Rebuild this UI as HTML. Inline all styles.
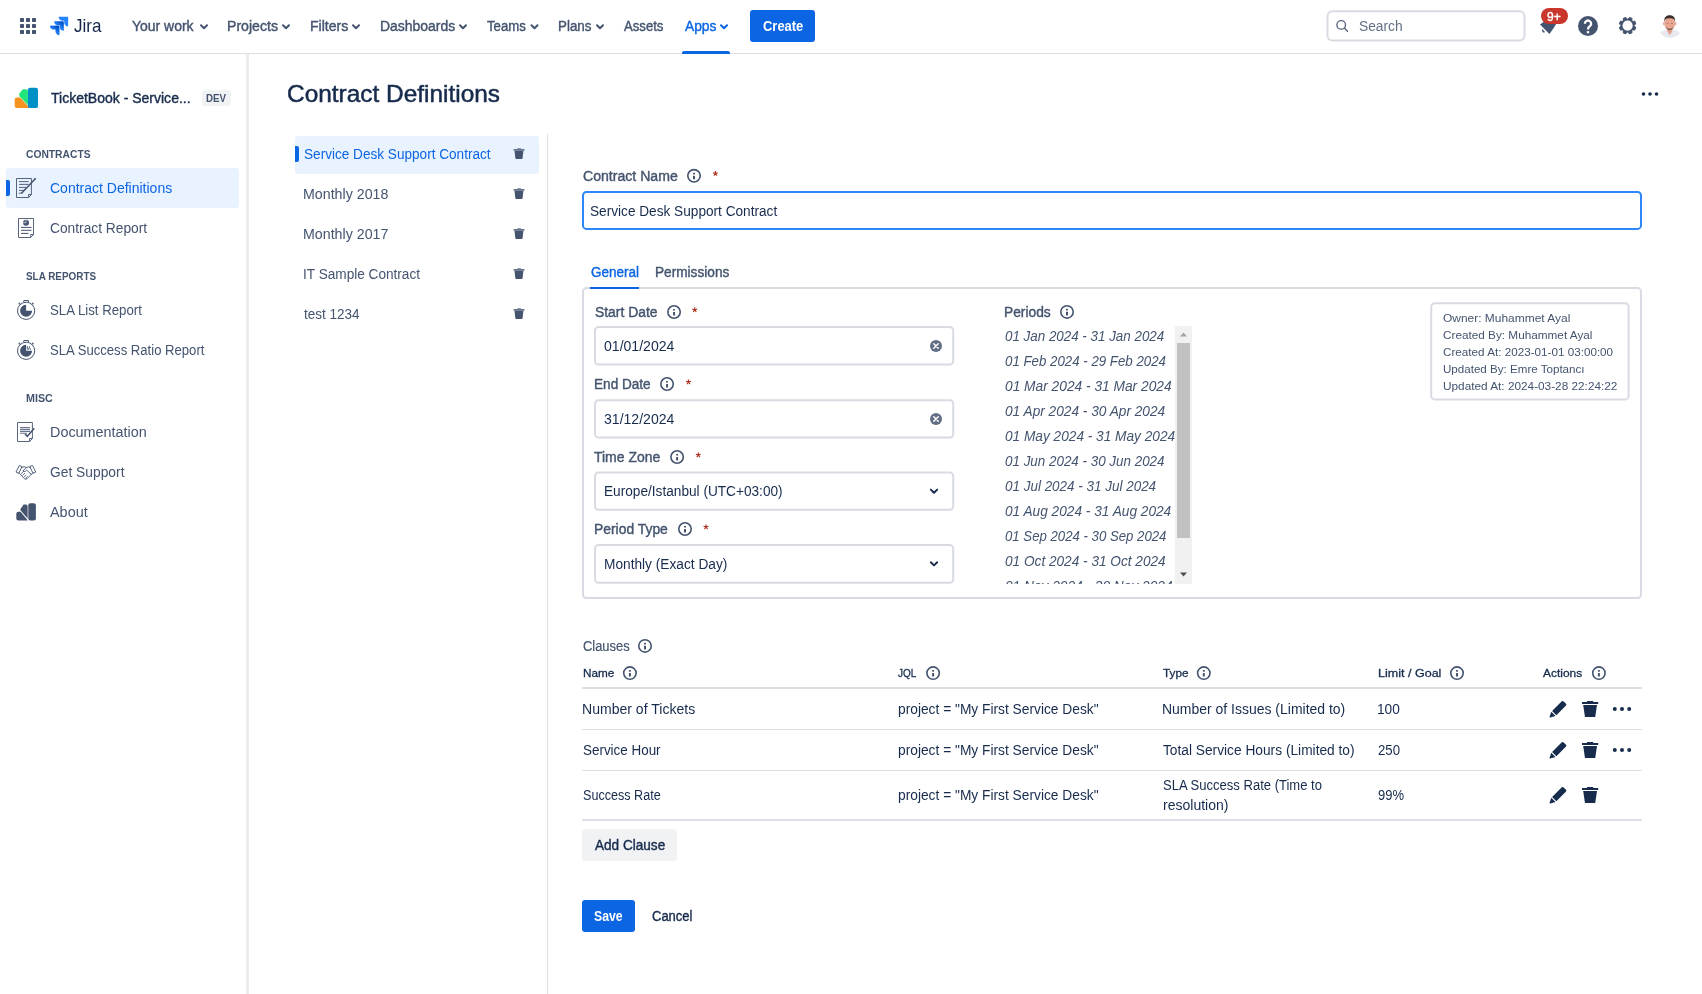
<!DOCTYPE html>
<html><head><meta charset="utf-8"><title>Contract Definitions - Jira</title>
<style>
*{box-sizing:border-box;margin:0;padding:0}
html,body{width:1702px;height:994px;overflow:hidden;background:#fff;font-family:"Liberation Sans",sans-serif}
.a{position:absolute}
.t{position:absolute;white-space:nowrap;line-height:20px;height:20px;transform-origin:0 50%}
.m{-webkit-text-stroke:0.4px currentColor}
.m2{-webkit-text-stroke:0.5px currentColor}
.m0{-webkit-text-stroke:0.2px currentColor}
.m1{-webkit-text-stroke:0.3px currentColor}
.b{font-weight:bold}
.i{font-style:italic}
svg{position:absolute;overflow:visible}
.inp{position:absolute;border:2px solid #DCDFE4;border-radius:4px;background:#fff}
.hl{position:absolute;background:#DCDFE4}
</style></head><body>
<!-- ===== TOP NAV ===== -->
<div class="a" style="left:0;top:53px;width:1702px;height:1px;background:#DCDFE4"></div>
<!-- app switcher -->
<svg style="left:20px;top:18px" width="16" height="16" viewBox="0 0 16 16" fill="#44546F">
<rect x="0" y="0" width="4" height="4" rx=".7"/><rect x="6" y="0" width="4" height="4" rx=".7"/><rect x="12" y="0" width="4" height="4" rx=".7"/>
<rect x="0" y="6" width="4" height="4" rx=".7"/><rect x="6" y="6" width="4" height="4" rx=".7"/><rect x="12" y="6" width="4" height="4" rx=".7"/>
<rect x="0" y="12" width="4" height="4" rx=".7"/><rect x="6" y="12" width="4" height="4" rx=".7"/><rect x="12" y="12" width="4" height="4" rx=".7"/>
</svg>
<!-- jira logo -->
<svg style="left:48px;top:15px" width="22" height="22" viewBox="0 0 24 24">
<defs><linearGradient id="jg1" x1="0.9" y1="0.1" x2="0.45" y2="0.6"><stop offset="0.15" stop-color="#0052CC"/><stop offset="1" stop-color="#2684FF"/></linearGradient></defs>
<path fill="#2684FF" d="M11.53 2c0 2.4 1.97 4.35 4.35 4.35h1.78v1.7c0 2.4 1.94 4.34 4.34 4.35V2.84a.84.84 0 0 0-.84-.84h-9.63z"/>
<path fill="url(#jg1)" d="M6.77 6.8a4.362 4.362 0 0 0 4.34 4.34h1.8v1.72a4.362 4.362 0 0 0 4.34 4.34V7.63a.841.841 0 0 0-.83-.83H6.77z"/>
<path fill="url(#jg1)" d="M2 11.6c0 2.4 1.95 4.34 4.35 4.34h1.78v1.72c.01 2.39 1.95 4.34 4.34 4.34v-9.57a.84.84 0 0 0-.84-.84L2 11.600z"/>
</svg>
<!-- nav chevrons -->
<svg style="left:0;top:0" width="760" height="54" viewBox="0 0 760 54" fill="none" stroke="#44546F" stroke-width="2" stroke-linecap="round" stroke-linejoin="round">
<path d="M201 25.2l3 3 3-3"/><path d="M283 25.200l3 3 3-3"/><path d="M353 25.200l3 3 3-3"/><path d="M460 25.200l3 3 3-3"/><path d="M531.500 25.200l3 3 3-3"/><path d="M597 25.200l3 3 3-3"/>
<path stroke="#0C66E4" d="M721 25.200l3 3 3-3"/>
</svg>
<div class="a" style="left:682px;top:51px;width:48px;height:3px;background:#0C66E4;border-radius:2px 2px 0 0"></div>
<div class="a" style="left:750px;top:10px;width:65px;height:32px;background:#0C66E4;border-radius:3px"></div>
<!-- search -->
<svg style="left:1335px;top:19px" width="14" height="14" viewBox="1335 19 14 14" fill="none" stroke="#56637B" stroke-width="1.350" stroke-linecap="round"><circle cx="1341.200" cy="24.900" r="4.300"/><path d="M1344.400 28.100l3.100 3.100"/></svg>
<!-- bell -->
<svg style="left:1536px;top:14px" width="24" height="24" viewBox="1536 14 24 24" fill="#44546F">
<path d="M1540 24.500 L1543.500 22 L1557 22 L1556.200 24.100 Q1553 29.500 1549.400 33.900 Z"/>
<path d="M1542.300 29 L1545 31.900 Q1543.700 33.100 1542.600 32 Q1541.500 30.600 1542.300 29 Z"/>
</svg>
<div class="a" style="left:1541px;top:8px;width:27px;height:16px;background:#C9372C;border-radius:8px"></div>
<!-- help -->
<svg style="left:1578px;top:16px" width="20" height="20" viewBox="0 0 20 20"><circle cx="10" cy="10" r="10" fill="#44546F"/>
<path d="M6.900 7.700 A3.100 3.100 0 1 1 12.300 9.700 C11.300 10.800 10 11.300 10 13.500" fill="none" stroke="#fff" stroke-width="2.300" stroke-linecap="butt"/><rect x="8.800" y="15.100" width="2.400" height="2.200" fill="#fff"/></svg>
<!-- gear -->
<svg style="left:1617px;top:15px" width="21" height="21" viewBox="-10.600 -10.600 21 21">
<g fill="#44546F" stroke="#44546F" stroke-width="0.900" stroke-linejoin="round"><circle r="6.250" stroke="none"/>
<path id="gt" d="M-2.300 -5.600 L-1.300 -8.300 L1.300 -8.300 L2.300 -5.600 Z" transform="rotate(22.500)"/>
<use href="#gt" transform="rotate(45)"/><use href="#gt" transform="rotate(90)"/><use href="#gt" transform="rotate(135)"/><use href="#gt" transform="rotate(180)"/><use href="#gt" transform="rotate(225)"/><use href="#gt" transform="rotate(270)"/><use href="#gt" transform="rotate(315)"/></g>
<circle r="5.100" fill="#fff"/></svg>
<!-- avatar -->
<svg style="left:1658px;top:13px" width="24" height="27" viewBox="1658 13 24 27">
<defs><filter id="avb" x="-20%" y="-20%" width="140%" height="140%"><feGaussianBlur stdDeviation="0.450"/></filter></defs>
<g filter="url(#avb)">
<path d="M1660.200 32.800 C1661.500 30.800 1664.500 29.900 1666.500 29.600 L1673 29.600 C1675 29.900 1678.500 30.800 1679.800 32.800 C1678 36 1674 38 1670 38 C1666 38 1662 36 1660.200 32.800 Z" fill="#E9E9F0"/>
<path d="M1667 28.500 L1672.600 28.500 L1672.200 31.500 L1669.700 35.200 L1667.300 31.500 Z" fill="#E3A48E"/>
<ellipse cx="1663.900" cy="23.800" rx="0.900" ry="1.700" fill="#E5A593"/><ellipse cx="1675.500" cy="23.800" rx="0.900" ry="1.700" fill="#E5A593"/>
<ellipse cx="1669.700" cy="23.600" rx="5.300" ry="7" fill="#E9A792"/>
<path d="M1664.300 22.500 C1663.600 16.500 1667 15.200 1669.700 15.200 C1672.400 15.200 1675.800 16.500 1675.100 22.500 C1674.800 19.500 1673.500 18.300 1669.700 18.300 C1665.900 18.300 1664.600 19.500 1664.300 22.500 Z" fill="#3A2F2E"/>
<path d="M1666.300 26.800 C1666.500 31.300 1672.900 31.300 1673.100 26.800 C1672.300 28.400 1671 28.500 1669.700 28.500 C1668.400 28.500 1667.100 28.400 1666.300 26.800 Z" fill="#7A5A54"/>
<ellipse cx="1667.500" cy="23.200" rx="1.100" ry="0.450" fill="#8A6A62"/><ellipse cx="1671.900" cy="23.200" rx="1.100" ry="0.450" fill="#8A6A62"/>
</g></svg>

<!-- ===== SIDEBAR ===== -->
<div class="a" style="left:246px;top:54px;width:3px;height:940px;background:#EBECF0"></div>
<!-- ticketbook logo -->
<svg style="left:14px;top:87px" width="26" height="22" viewBox="14 87 26 22">
<path d="M16.700 97.400 L20.300 97.400 L29.600 107.900 L16.700 107.900 Q14.700 107.900 14.700 105.900 L14.700 99.400 Q14.700 97.400 16.700 97.400 Z" fill="#F79420"/>
<path d="M22.800 89.200 L25.800 89.200 Q27.900 89.200 27.900 91 L27.900 105.300 L19.600 96.200 Q18.700 94.800 19.600 93.200 Z" fill="#1FE57A"/>
<rect x="27.900" y="87.800" width="10.100" height="20.300" rx="2.200" fill="#0090C8"/>
</svg>
<div class="a" style="left:202px;top:90px;width:29px;height:16px;background:#F1F2F4;border-radius:3px"></div>
<!-- selected item -->
<div class="a" style="left:6px;top:168px;width:233px;height:40px;background:#E9F2FF;border-radius:3px"></div>
<div class="a" style="left:6px;top:180px;width:4px;height:16px;background:#0C66E4;border-radius:0 2px 2px 0"></div>
<!-- icon: contract definitions -->
<svg style="left:14px;top:176px" width="24" height="24" viewBox="14 176 24 24" fill="none" stroke="#44546F" stroke-width="0.900">
<path d="M16.500 178.500 H31.400 V194.500 L28.600 197.500 H16.500 Z M31.400 194.500 H28.600 V197.500" />
<path d="M19 181.600H28.500 M19 184.400H28.500 M19 187.400H26 M19 190.400H24" stroke-width="0.900"/>
<path d="M34.800 179.200 L21.500 193.200" stroke-width="1.500"/><path d="M35.600 178.300 L34.300 179.700" stroke-width="1.800"/>
<path d="M18.600 193.600 C20 192 21.500 194.500 22.800 192.600" stroke-width="0.900"/>
</svg>
<!-- icon: contract report -->
<svg style="left:14px;top:216px" width="24" height="24" viewBox="14 216 24 24" fill="none" stroke="#44546F" stroke-width="0.900">
<path d="M18.500 218.500 H33.500 V234.500 L30.700 237.500 H18.500 Z M33.500 234.500 H30.700 V237.500"/>
<circle cx="26" cy="222.700" r="3" fill="#44546F" stroke="none"/><path d="M26 222.700 V219.700 M26 222.700 H23" stroke="#fff" stroke-width="0.600"/>
<path d="M21 227.400H31.500 M21 230.300H31.500 M21 233.400H28.500" stroke-width="1"/>
</svg>
<!-- icon: stopwatch x2 -->
<svg style="left:14px;top:298px" width="24" height="24" viewBox="14 298 24 24" fill="none" stroke="#44546F" stroke-width="1">
<circle cx="26.100" cy="310.800" r="8.600"/><path d="M26.100 310.800 V304.800 A6 6 0 1 0 32.100 310.800 Z" fill="#44546F" stroke="none"/>
<path d="M23.800 301.900 V300.500 H28.400 V301.900" stroke-width="1"/><path d="M19.300 304.600 L18.600 303.200 L20.200 302.800 Z M32.900 304.600 L33.600 303.200 L32 302.800 Z" fill="#44546F" stroke-width="0.500"/>
</svg>
<svg style="left:14px;top:338px" width="24" height="24" viewBox="14 338 24 24" fill="none" stroke="#44546F" stroke-width="1">
<circle cx="26.100" cy="350.800" r="8.600"/><path d="M26.100 350.800 V344.800 A6 6 0 1 0 32.100 350.800 Z" fill="#44546F" stroke="none"/>
<path d="M23.800 341.900 V340.500 H28.400 V341.900" stroke-width="1"/><path d="M19.300 344.600 L18.600 343.200 L20.200 342.800 Z M32.900 344.600 L33.600 343.200 L32 342.800 Z" fill="#44546F" stroke-width="0.500"/>
<path d="M27.300 346 V349.600 M29.800 346.200 L28.300 349.800" stroke-width="0.900"/><circle cx="30.300" cy="349" r="0.700" fill="#44546F" stroke="none"/>
</svg>
<!-- icon: documentation -->
<svg style="left:14px;top:420px" width="24" height="24" viewBox="14 420 24 24" fill="none" stroke="#44546F" stroke-width="0.900">
<path d="M17.500 422.500 H32.400 V438.500 L29.600 441.500 H17.500 Z M32.400 438.500 H29.600 V441.500"/>
<path d="M20 427.600H30 M20 429.500H30 M20 431.400H30 M20 433.200H27" stroke-width="1.100" stroke="#66748C"/>
<path d="M25 434 L27.300 436.300 L34.300 428.200" stroke-width="1.500" stroke="#44546F"/>
</svg>
<!-- icon: handshake -->
<svg style="left:14px;top:460px" width="24" height="24" viewBox="14 460 24 24" fill="none" stroke="#44546F" stroke-width="0.900" stroke-linejoin="round" stroke-linecap="round">
<path d="M16.200 471.700 L19.400 465.400 L22 466.600 L18.900 473 Z"/>
<path d="M35.600 471.700 L32.400 465.400 L29.800 466.600 L32.900 473 Z"/>
<path d="M21.500 467.500 L24.200 466.600 L26.200 467.600 L28.500 466.800 L30.300 467.500"/>
<path d="M19 472.900 L24.500 478.800 Q25.900 479.700 27 478.700 L32.800 472.800"/>
<path d="M26.200 467.600 L22.800 471 Q23.800 472.300 25.200 471.400 L26.700 470.100 L31.300 474.400"/>
<path d="M21.300 473.600 L23.500 471.500 M22.800 475.200 L24.700 473.400 M24.300 476.700 L26 475.100 M25.700 478.200 L27.300 476.700" stroke-width="0.800"/>
</svg>
<!-- icon: about -->
<svg style="left:14px;top:501px" width="24" height="22" viewBox="14 501 24 22" fill="#44546F">
<path d="M18.400 511.800 L20.600 511.800 L27.800 520.400 L18.400 520.400 Q16.300 520.400 16.300 518.400 L16.300 513.800 Q16.300 511.800 18.400 511.800 Z"/>
<path d="M23.600 504.600 L26 504.600 Q27.600 504.600 27.600 506.200 L27.600 518.600 L20.700 510.600 Q20.100 509.800 20.700 508.800 Z"/>
<rect x="28.300" y="503.200" width="7.600" height="17.300" rx="2"/>
</svg>

<!-- ===== MAIN ===== -->
<!-- page dots -->
<svg style="left:1640px;top:90px" width="20" height="8" viewBox="0 0 20 8" fill="#172B4D"><circle cx="3.500" cy="4" r="1.800"/><circle cx="10" cy="4" r="1.800"/><circle cx="16.500" cy="4" r="1.800"/></svg>
<!-- contract list -->
<div class="a" style="left:295px;top:136px;width:244px;height:38px;background:#E9F2FF;border-radius:3px"></div>
<div class="a" style="left:295px;top:146px;width:4px;height:16px;background:#0C66E4;border-radius:0 2px 2px 0"></div>
<div class="a" style="left:547px;top:134px;width:1px;height:860px;background:#DCDFE4"></div>
<svg style="left:0;top:0" width="540" height="330" viewBox="0 0 540 330" fill="#44546F">
<g id="tr"><path fill="#66758F" d="M513.600 149.100 h10.900 v1.700 h-10.900 z M517.400 148.300 h3.600 v0.900 h-3.600 z"/><path d="M514.500 150.800 h8.900 l-0.800 7.200 q-0.100 0.900 -1 0.900 h-5.300 q-0.900 0 -1 -0.900 z"/></g>
<use href="#tr" y="40"/><use href="#tr" y="80"/><use href="#tr" y="120"/><use href="#tr" y="160"/>
</svg>
<!-- contract name input -->
<!-- tabs -->
<svg style="left:1325px;top:9px" width="202" height="34" viewBox="1325 9 202 34"><rect x="1327.50" y="11.20" width="197.00" height="29.30" rx="5" fill="none" stroke="#D8DBE2" stroke-width="2"/></svg>
<svg style="left:581px;top:189px" width="1062" height="42" viewBox="581 189 1062 42"><rect x="583.00" y="191.90" width="1058.00" height="37.00" rx="3.5" fill="#fff" stroke="#2F86FB" stroke-width="2"/></svg>
<svg style="left:581px;top:286px" width="1062" height="315" viewBox="581 286 1062 315"><rect x="583.00" y="288.10" width="1058.00" height="310.00" rx="3.5" fill="none" stroke="#D8DBE2" stroke-width="2"/></svg>
<svg style="left:593px;top:325px" width="363" height="42" viewBox="593 325 363 42"><rect x="595.00" y="327.00" width="358.20" height="37.60" rx="3.5" fill="#fff" stroke="#D8DBE2" stroke-width="2"/></svg>
<svg style="left:593px;top:398px" width="363" height="42" viewBox="593 398 363 42"><rect x="595.00" y="400.20" width="358.20" height="37.40" rx="3.5" fill="#fff" stroke="#D8DBE2" stroke-width="2"/></svg>
<svg style="left:593px;top:470px" width="363" height="42" viewBox="593 470 363 42"><rect x="595.00" y="472.50" width="358.20" height="37.30" rx="3.5" fill="#fff" stroke="#D8DBE2" stroke-width="2"/></svg>
<svg style="left:593px;top:543px" width="363" height="42" viewBox="593 543 363 42"><rect x="595.00" y="545.10" width="358.20" height="37.60" rx="3.5" fill="#fff" stroke="#D8DBE2" stroke-width="2"/></svg>
<svg style="left:1429px;top:301px" width="202" height="101" viewBox="1429 301 202 101"><rect x="1431.20" y="303.20" width="197.40" height="96.20" rx="3.5" fill="#fff" stroke="#D8DBE2" stroke-width="2"/></svg>
<div class="a" style="left:590px;top:287px;width:49px;height:2px;background:#0C66E4"></div>
<!-- inputs -->
<!-- clear icons -->
<svg style="left:930px;top:340px" width="12" height="12" viewBox="0 0 12 12"><circle cx="6" cy="6" r="6" fill="#626F86"/><path d="M3.800 3.800l4.400 4.400M8.200 3.800l-4.400 4.400" stroke="#fff" stroke-width="1.500" stroke-linecap="round"/></svg>
<svg style="left:930px;top:413px" width="12" height="12" viewBox="0 0 12 12"><circle cx="6" cy="6" r="6" fill="#626F86"/><path d="M3.800 3.800l4.400 4.400M8.200 3.800l-4.400 4.400" stroke="#fff" stroke-width="1.500" stroke-linecap="round"/></svg>
<!-- select chevrons -->
<svg style="left:929px;top:487px" width="10" height="9" viewBox="0 -0.400 10 9" fill="none" stroke="#172B4D" stroke-width="1.900" stroke-linecap="round" stroke-linejoin="round"><path d="M1.800 2.200l3.200 3.100 3.200-3.100"/></svg>
<svg style="left:929px;top:560px" width="10" height="9" viewBox="0 -0.100 10 9" fill="none" stroke="#172B4D" stroke-width="1.900" stroke-linecap="round" stroke-linejoin="round"><path d="M1.800 2.200l3.200 3.100 3.200-3.100"/></svg>
<!-- periods list -->
<div class="a" id="plist" style="left:1004px;top:326px;width:188px;height:257.500px;overflow:hidden">
<span class="t i" style="left:0.50px;top:0.0px;font-size:14px;transform:scaleX(0.9557);color:#44546F">01 Jan 2024 - 31 Jan 2024</span>
<span class="t i" style="left:0.50px;top:25.0px;font-size:14px;transform:scaleX(0.9488);color:#44546F">01 Feb 2024 - 29 Feb 2024</span>
<span class="t i" style="left:0.50px;top:50.0px;font-size:14px;transform:scaleX(0.9819);color:#44546F">01 Mar 2024 - 31 Mar 2024</span>
<span class="t i" style="left:0.50px;top:75.0px;font-size:14px;transform:scaleX(0.9769);color:#44546F">01 Apr 2024 - 30 Apr 2024</span>
<span class="t i" style="left:0.50px;top:100.0px;font-size:14px;transform:scaleX(0.9757);color:#44546F">01 May 2024 - 31 May 2024</span>
<span class="t i" style="left:0.50px;top:125.0px;font-size:14px;transform:scaleX(0.9575);color:#44546F">01 Jun 2024 - 30 Jun 2024</span>
<span class="t i" style="left:0.50px;top:150.0px;font-size:14px;transform:scaleX(0.9610);color:#44546F">01 Jul 2024 - 31 Jul 2024</span>
<span class="t i" style="left:0.50px;top:175.0px;font-size:14px;transform:scaleX(0.9763);color:#44546F">01 Aug 2024 - 31 Aug 2024</span>
<span class="t i" style="left:0.50px;top:200.0px;font-size:14px;transform:scaleX(0.9425);color:#44546F">01 Sep 2024 - 30 Sep 2024</span>
<span class="t i" style="left:0.50px;top:225.0px;font-size:14px;transform:scaleX(0.9739);color:#44546F">01 Oct 2024 - 31 Oct 2024</span>
<span class="t i" style="left:0.50px;top:250.0px;font-size:14px;transform:scaleX(0.9782);color:#44546F">01 Nov 2024 - 30 Nov 2024</span>
<div class="a" style="left:171px;top:0;width:17px;height:257.500px;background:#F1F1F1"></div>
<div class="a" style="left:173px;top:17px;width:13px;height:195px;background:#C1C1C1"></div>
<svg style="left:171px;top:0" width="17" height="258" viewBox="0 0 17 258"><path d="M5 10.500 L8.500 6.500 L12 10.500 Z" fill="#A3A3A3"/><path d="M5 246.500 L8.500 250.500 L12 246.500 Z" fill="#505050"/></svg>
</div>
<!-- info box -->
<!-- table lines -->
<div class="hl" style="left:582px;top:687px;width:1060px;height:2px"></div>
<div class="hl" style="left:582px;top:729px;width:1060px;height:1px"></div>
<div class="hl" style="left:582px;top:770px;width:1060px;height:1px"></div>
<div class="hl" style="left:582px;top:819px;width:1060px;height:2px"></div>
<!-- action icons -->
<svg style="left:0;top:0" width="1702" height="830" viewBox="0 0 1702 830" fill="#172B4D">
<g id="pen"><path d="M1561.800 701.200 q1 -0.700 1.900 0.200 l2.300 2.300 q0.900 0.900 0 1.900 l-9.600 9.600 l-4.300 -4.300 z M1551.300 711.700 l4.200 4.200 l-5.300 1.500 q-0.900 0.200 -0.600 -0.700 z"/></g>
<g id="bin"><path d="M1582 702 h16.200 v2.100 h-16.200 z M1587 700.900 h6.200 v1.200 h-6.200 z M1583.200 705.100 h13.800 l-1.700 11.300 q-0.080 0.500 -0.600 0.500 h-9.200 q-0.520 0 -0.600 -0.500 z"/></g>
<g id="dots"><circle cx="1614.800" cy="709" r="2"/><circle cx="1622" cy="709" r="2"/><circle cx="1629.200" cy="709" r="2"/></g>
<use href="#pen" y="41"/><use href="#bin" y="41"/><use href="#dots" y="41"/>
<use href="#pen" y="86"/><use href="#bin" y="86"/>
</svg>
<!-- buttons -->
<div class="a" style="left:582px;top:829px;width:95px;height:32px;background:#F1F2F4;border-radius:3px"></div>
<div class="a" style="left:582px;top:900px;width:53px;height:32px;background:#0C66E4;border-radius:3px"></div>
<!-- info icons + asterisks -->
<svg style="left:685px;top:166px" width="18" height="18" viewBox="685 166 18 18"><circle cx="694.00" cy="175.80" r="6.2" fill="none" stroke="#44546F" stroke-width="1.6"/><rect x="693.00" y="175.70" width="2" height="3.6" rx=".3" fill="#44546F"/><rect x="693.00" y="172.70" width="2" height="1.7" rx=".4" fill="#44546F"/></svg>
<svg style="left:711px;top:169px" width="9" height="9" viewBox="711 169 9 9"><path d="M715.40 173.50L715.40 170.90M715.40 173.50L717.87 172.70M715.40 173.50L716.93 175.60M715.40 173.50L713.87 175.60M715.40 173.50L712.93 172.70" stroke="#AE2A19" stroke-width="1.05" fill="none"/></svg>
<svg style="left:665px;top:303px" width="18" height="18" viewBox="665 303 18 18"><circle cx="674.05" cy="312.00" r="6.2" fill="none" stroke="#44546F" stroke-width="1.6"/><rect x="673.05" y="311.90" width="2" height="3.6" rx=".3" fill="#44546F"/><rect x="673.05" y="308.90" width="2" height="1.7" rx=".4" fill="#44546F"/></svg>
<svg style="left:690px;top:305px" width="9" height="9" viewBox="690 305 9 9"><path d="M694.75 309.90L694.75 307.30M694.75 309.90L697.22 309.10M694.75 309.90L696.28 312.00M694.75 309.90L693.22 312.00M694.75 309.90L692.28 309.10" stroke="#AE2A19" stroke-width="1.05" fill="none"/></svg>
<svg style="left:658px;top:375px" width="18" height="18" viewBox="658 375 18 18"><circle cx="667.05" cy="384.00" r="6.2" fill="none" stroke="#44546F" stroke-width="1.6"/><rect x="666.05" y="383.90" width="2" height="3.6" rx=".3" fill="#44546F"/><rect x="666.05" y="380.90" width="2" height="1.7" rx=".4" fill="#44546F"/></svg>
<svg style="left:684px;top:378px" width="9" height="9" viewBox="684 378 9 9"><path d="M688.45 382.00L688.45 379.40M688.45 382.00L690.92 381.20M688.45 382.00L689.98 384.10M688.45 382.00L686.92 384.10M688.45 382.00L685.98 381.20" stroke="#AE2A19" stroke-width="1.05" fill="none"/></svg>
<svg style="left:668px;top:448px" width="18" height="18" viewBox="668 448 18 18"><circle cx="677.10" cy="457.00" r="6.2" fill="none" stroke="#44546F" stroke-width="1.6"/><rect x="676.10" y="456.90" width="2" height="3.6" rx=".3" fill="#44546F"/><rect x="676.10" y="453.90" width="2" height="1.7" rx=".4" fill="#44546F"/></svg>
<svg style="left:694px;top:451px" width="9" height="9" viewBox="694 451 9 9"><path d="M698.30 455.00L698.30 452.40M698.30 455.00L700.77 454.20M698.30 455.00L699.83 457.10M698.30 455.00L696.77 457.10M698.30 455.00L695.83 454.20" stroke="#AE2A19" stroke-width="1.05" fill="none"/></svg>
<svg style="left:676px;top:520px" width="18" height="18" viewBox="676 520 18 18"><circle cx="685.00" cy="529.00" r="6.2" fill="none" stroke="#44546F" stroke-width="1.6"/><rect x="684.00" y="528.90" width="2" height="3.6" rx=".3" fill="#44546F"/><rect x="684.00" y="525.90" width="2" height="1.7" rx=".4" fill="#44546F"/></svg>
<svg style="left:702px;top:523px" width="9" height="9" viewBox="702 523 9 9"><path d="M706.00 527.00L706.00 524.40M706.00 527.00L708.47 526.20M706.00 527.00L707.53 529.10M706.00 527.00L704.47 529.10M706.00 527.00L703.53 526.20" stroke="#AE2A19" stroke-width="1.05" fill="none"/></svg>
<svg style="left:1058px;top:302px" width="18" height="18" viewBox="1058 302 18 18"><circle cx="1067.00" cy="311.90" r="6.2" fill="none" stroke="#44546F" stroke-width="1.6"/><rect x="1066.00" y="311.80" width="2" height="3.6" rx=".3" fill="#44546F"/><rect x="1066.00" y="308.80" width="2" height="1.7" rx=".4" fill="#44546F"/></svg>
<svg style="left:636px;top:636px" width="18" height="18" viewBox="636 636 18 18"><circle cx="645.00" cy="645.90" r="6.2" fill="none" stroke="#44546F" stroke-width="1.6"/><rect x="644.00" y="645.80" width="2" height="3.6" rx=".3" fill="#44546F"/><rect x="644.00" y="642.80" width="2" height="1.7" rx=".4" fill="#44546F"/></svg>
<svg style="left:620px;top:664px" width="18" height="18" viewBox="620 664 18 18"><circle cx="629.90" cy="673.10" r="6.2" fill="none" stroke="#44546F" stroke-width="1.6"/><rect x="628.90" y="673.00" width="2" height="3.6" rx=".3" fill="#44546F"/><rect x="628.90" y="670.00" width="2" height="1.7" rx=".4" fill="#44546F"/></svg>
<svg style="left:924px;top:664px" width="18" height="18" viewBox="924 664 18 18"><circle cx="933.10" cy="673.10" r="6.2" fill="none" stroke="#44546F" stroke-width="1.6"/><rect x="932.10" y="673.00" width="2" height="3.6" rx=".3" fill="#44546F"/><rect x="932.10" y="670.00" width="2" height="1.7" rx=".4" fill="#44546F"/></svg>
<svg style="left:1194px;top:664px" width="18" height="18" viewBox="1194 664 18 18"><circle cx="1203.80" cy="673.10" r="6.2" fill="none" stroke="#44546F" stroke-width="1.6"/><rect x="1202.80" y="673.00" width="2" height="3.6" rx=".3" fill="#44546F"/><rect x="1202.80" y="670.00" width="2" height="1.7" rx=".4" fill="#44546F"/></svg>
<svg style="left:1448px;top:664px" width="18" height="18" viewBox="1448 664 18 18"><circle cx="1457.00" cy="673.10" r="6.2" fill="none" stroke="#44546F" stroke-width="1.6"/><rect x="1456.00" y="673.00" width="2" height="3.6" rx=".3" fill="#44546F"/><rect x="1456.00" y="670.00" width="2" height="1.7" rx=".4" fill="#44546F"/></svg>
<svg style="left:1589px;top:664px" width="18" height="18" viewBox="1589 664 18 18"><circle cx="1598.90" cy="673.10" r="6.2" fill="none" stroke="#44546F" stroke-width="1.6"/><rect x="1597.90" y="673.00" width="2" height="3.6" rx=".3" fill="#44546F"/><rect x="1597.90" y="670.00" width="2" height="1.7" rx=".4" fill="#44546F"/></svg>
<!-- texts -->
<span class="t r" style="left:73.90px;top:16.0px;font-size:18.25px;transform:scaleX(0.9320);color:#14264A;">Jira</span>
<span class="t m" style="left:132.40px;top:16.0px;font-size:14px;transform:scaleX(0.9979);color:#44546F;">Your work</span>
<span class="t m" style="left:226.79px;top:16.0px;font-size:14px;transform:scaleX(1.0086);color:#44546F;">Projects</span>
<span class="t m" style="left:309.50px;top:16.0px;font-size:14px;transform:scaleX(1.0051);color:#44546F;">Filters</span>
<span class="t m" style="left:379.60px;top:16.0px;font-size:14px;transform:scaleX(0.9961);color:#44546F;">Dashboards</span>
<span class="t m" style="left:487.49px;top:16.0px;font-size:14px;transform:scaleX(0.9415);color:#44546F;">Teams</span>
<span class="t m" style="left:557.94px;top:16.0px;font-size:14px;transform:scaleX(0.9558);color:#44546F;">Plans</span>
<span class="t m" style="left:624.19px;top:16.0px;font-size:14px;transform:scaleX(0.9384);color:#44546F;">Assets</span>
<span class="t m" style="left:684.60px;top:16.0px;font-size:14px;transform:scaleX(0.9842);color:#0C66E4;">Apps</span>
<span class="t b" style="left:762.50px;top:16.0px;font-size:14px;transform:scaleX(0.9248);color:#FFFFFF;">Create</span>
<span class="t r" style="left:1358.80px;top:16.0px;font-size:14px;transform:scaleX(0.9846);color:#626F86;">Search</span>
<span class="t m" style="left:1547.39px;top:7.0px;font-size:12.5px;transform:scaleX(0.9615);color:#FFFFFF;">9+</span>
<span class="t m" style="left:50.50px;top:88.0px;font-size:14px;transform:scaleX(1.0005);color:#172B4D;">TicketBook - Service...</span>
<span class="t b" style="left:206.20px;top:88.0px;font-size:11px;transform:scaleX(0.8891);color:#44546F;">DEV</span>
<span class="t b" style="left:26.10px;top:144.0px;font-size:11px;transform:scaleX(0.9343);color:#44546F;">CONTRACTS</span>
<span class="t r" style="left:50.40px;top:178.0px;font-size:14px;transform:scaleX(1.0003);color:#0C66E4;">Contract Definitions</span>
<span class="t r" style="left:50.40px;top:218.0px;font-size:14px;transform:scaleX(0.9835);color:#44546F;">Contract Report</span>
<span class="t b" style="left:26.10px;top:266.0px;font-size:11px;transform:scaleX(0.9000);color:#44546F;">SLA REPORTS</span>
<span class="t r" style="left:50.40px;top:300.0px;font-size:14px;transform:scaleX(0.9444);color:#44546F;">SLA List Report</span>
<span class="t r" style="left:50.40px;top:340.0px;font-size:14px;transform:scaleX(0.9358);color:#44546F;">SLA Success Ratio Report</span>
<span class="t b" style="left:26.10px;top:388.0px;font-size:11px;transform:scaleX(0.9762);color:#44546F;">MISC</span>
<span class="t r" style="left:49.67px;top:422.0px;font-size:14px;transform:scaleX(1.0273);color:#44546F;">Documentation</span>
<span class="t r" style="left:50.40px;top:462.0px;font-size:14px;transform:scaleX(0.9868);color:#44546F;">Get Support</span>
<span class="t r" style="left:50.40px;top:502.0px;font-size:14px;transform:scaleX(1.0301);color:#44546F;">About</span>
<span class="t m2" style="left:287.03px;top:84.0px;font-size:23.75px;transform:scaleX(1.0277);color:#172B4D;">Contract Definitions</span>
<span class="t r" style="left:303.60px;top:144.0px;font-size:14px;transform:scaleX(0.9709);color:#0C66E4;">Service Desk Support Contract</span>
<span class="t r" style="left:302.58px;top:184.0px;font-size:14px;transform:scaleX(1.0160);color:#44546F;">Monthly 2018</span>
<span class="t r" style="left:302.58px;top:224.0px;font-size:14px;transform:scaleX(1.0160);color:#44546F;">Monthly 2017</span>
<span class="t r" style="left:302.63px;top:264.0px;font-size:14px;transform:scaleX(0.9724);color:#44546F;">IT Sample Contract</span>
<span class="t r" style="left:303.60px;top:304.0px;font-size:14px;transform:scaleX(0.9652);color:#44546F;">test 1234</span>
<span class="t m" style="left:582.70px;top:166.0px;font-size:14px;transform:scaleX(1.0068);color:#44546F;">Contract Name</span>
<span class="t r" style="left:590.30px;top:201.0px;font-size:14px;transform:scaleX(0.9740);color:#172B4D;">Service Desk Support Contract</span>
<span class="t m" style="left:590.69px;top:262.0px;font-size:14px;transform:scaleX(0.9621);color:#0C66E4;">General</span>
<span class="t m" style="left:654.92px;top:262.0px;font-size:14px;transform:scaleX(0.9743);color:#44546F;">Permissions</span>
<span class="t m" style="left:594.70px;top:302.0px;font-size:14px;transform:scaleX(0.9915);color:#44546F;">Start Date</span>
<span class="t r" style="left:604.40px;top:336.0px;font-size:14px;transform:scaleX(1.0045);color:#172B4D;">01/01/2024</span>
<span class="t m" style="left:594.02px;top:374.0px;font-size:14px;transform:scaleX(0.9709);color:#44546F;">End Date</span>
<span class="t r" style="left:604.40px;top:409.0px;font-size:14px;transform:scaleX(1.0045);color:#172B4D;">31/12/2024</span>
<span class="t m" style="left:594.40px;top:447.0px;font-size:14px;transform:scaleX(0.9984);color:#44546F;">Time Zone</span>
<span class="t r" style="left:603.63px;top:481.0px;font-size:14px;transform:scaleX(0.9747);color:#172B4D;">Europe/Istanbul (UTC+03:00)</span>
<span class="t m" style="left:594.01px;top:519.0px;font-size:14px;transform:scaleX(0.9916);color:#44546F;">Period Type</span>
<span class="t r" style="left:603.82px;top:554.0px;font-size:14px;transform:scaleX(0.9785);color:#172B4D;">Monthly (Exact Day)</span>
<span class="t m" style="left:1003.91px;top:302.0px;font-size:14px;transform:scaleX(0.9836);color:#44546F;">Periods</span>
<span class="t r" style="left:1442.90px;top:308.0px;font-size:11.6px;transform:scaleX(1.0310);color:#44546F;">Owner: Muhammet Ayal</span>
<span class="t r" style="left:1442.90px;top:325.0px;font-size:11.6px;transform:scaleX(1.0141);color:#44546F;">Created By: Muhammet Ayal</span>
<span class="t r" style="left:1442.90px;top:342.0px;font-size:11.6px;transform:scaleX(1.0073);color:#44546F;">Created At: 2023-01-01 03:00:00</span>
<span class="t r" style="left:1442.90px;top:359.0px;font-size:11.6px;transform:scaleX(0.9996);color:#44546F;">Updated By: Emre Toptancı</span>
<span class="t r" style="left:1442.90px;top:376.0px;font-size:11.6px;transform:scaleX(1.0171);color:#44546F;">Updated At: 2024-03-28 22:24:22</span>
<span class="t m0" style="left:582.59px;top:636.0px;font-size:14px;transform:scaleX(0.9216);color:#44546F;">Clauses</span>
<span class="t m1" style="left:582.95px;top:663.0px;font-size:11.6px;transform:scaleX(1.0137);color:#172B4D;">Name</span>
<span class="t m1" style="left:897.93px;top:663.0px;font-size:11.6px;transform:scaleX(0.8637);color:#172B4D;">JQL</span>
<span class="t m1" style="left:1163.05px;top:663.0px;font-size:11.6px;transform:scaleX(1.0125);color:#172B4D;">Type</span>
<span class="t m1" style="left:1377.86px;top:663.0px;font-size:11.6px;transform:scaleX(1.0813);color:#172B4D;">Limit / Goal</span>
<span class="t m1" style="left:1543.15px;top:663.0px;font-size:11.6px;transform:scaleX(1.0306);color:#172B4D;">Actions</span>
<span class="t r" style="left:581.80px;top:699.0px;font-size:14px;transform:scaleX(1.0030);color:#172B4D;">Number of Tickets</span>
<span class="t r" style="left:897.90px;top:699.0px;font-size:14px;transform:scaleX(0.9830);color:#172B4D;">project = &quot;My First Service Desk&quot;</span>
<span class="t r" style="left:1162.20px;top:699.0px;font-size:14px;transform:scaleX(0.9980);color:#172B4D;">Number of Issues (Limited to)</span>
<span class="t r" style="left:1376.92px;top:699.0px;font-size:14px;transform:scaleX(0.9791);color:#172B4D;">100</span>
<span class="t r" style="left:582.50px;top:740.0px;font-size:14px;transform:scaleX(0.9587);color:#172B4D;">Service Hour</span>
<span class="t r" style="left:897.90px;top:740.0px;font-size:14px;transform:scaleX(0.9830);color:#172B4D;">project = &quot;My First Service Desk&quot;</span>
<span class="t r" style="left:1163.20px;top:740.0px;font-size:14px;transform:scaleX(0.9809);color:#172B4D;">Total Service Hours (Limited to)</span>
<span class="t r" style="left:1377.90px;top:740.0px;font-size:14px;transform:scaleX(0.9418);color:#172B4D;">250</span>
<span class="t r" style="left:582.50px;top:785.0px;font-size:14px;transform:scaleX(0.8997);color:#172B4D;">Success Rate</span>
<span class="t r" style="left:897.90px;top:785.0px;font-size:14px;transform:scaleX(0.9830);color:#172B4D;">project = &quot;My First Service Desk&quot;</span>
<span class="t r" style="left:1163.20px;top:775.0px;font-size:14px;transform:scaleX(0.9316);color:#172B4D;">SLA Success Rate (Time to</span>
<span class="t r" style="left:1163.20px;top:795.0px;font-size:14px;transform:scaleX(1.0015);color:#172B4D;">resolution)</span>
<span class="t r" style="left:1377.90px;top:785.0px;font-size:14px;transform:scaleX(0.9285);color:#172B4D;">99%</span>
<span class="t m" style="left:594.59px;top:835.0px;font-size:14px;transform:scaleX(0.9700);color:#172B4D;">Add Clause</span>
<span class="t b" style="left:594.40px;top:906.0px;font-size:14px;transform:scaleX(0.8751);color:#FFFFFF;">Save</span>
<span class="t m" style="left:652.09px;top:906.0px;font-size:14px;transform:scaleX(0.9278);color:#172B4D;">Cancel</span>
</body></html>
